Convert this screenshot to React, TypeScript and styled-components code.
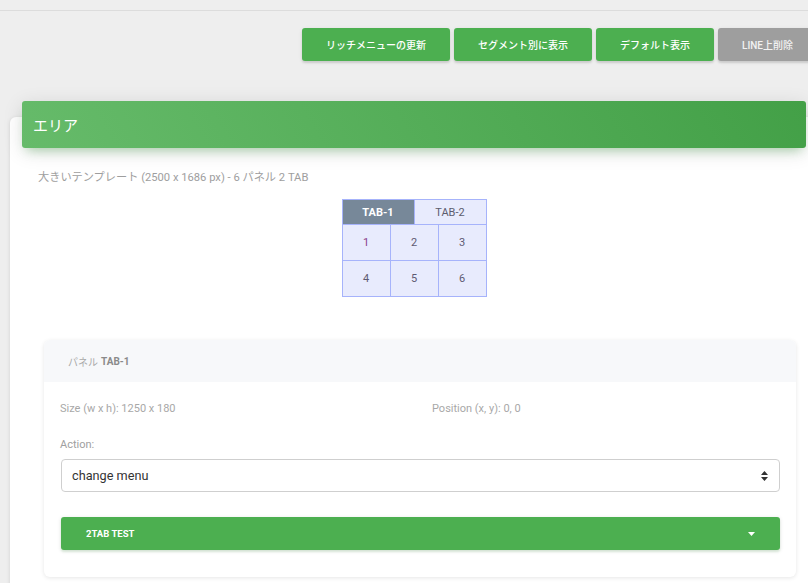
import * as React from 'react';
import styled, { createGlobalStyle } from 'styled-components';

const GlobalStyle = createGlobalStyle`
  html, body {
    margin: 0;
    padding: 0;
    background: #eeeeee;
    overflow: hidden;
  }
  body {
    font-family: Roboto, "Noto Sans CJK JP", "Liberation Sans", sans-serif;
    color: #333;
  }
`;

const Page = styled.div`
  width: 818px;
`;

const TopStrip = styled.div`
  height: 10px;
  border-bottom: 1px solid #dcdcdc;
`;

const Toolbar = styled.div`
  display: flex;
  justify-content: flex-end;
  gap: 4px;
  margin-top: 17px;
  margin-right: 1px;
`;

const ActionButton = styled.button<{ $muted?: boolean }>`
  height: 33px;
  padding: 0 24px;
  border: none;
  border-radius: 3px;
  background: ${(p) => (p.$muted ? '#9e9e9e' : '#4caf50')};
  color: ${(p) => (p.$muted ? '#f2f2f2' : '#fff')};
  font-family: inherit;
  font-size: 10px;
  font-weight: 500;
  white-space: nowrap;
  box-shadow: 0 2px 2px 0 rgba(0, 0, 0, 0.1), 0 1px 4px 0 rgba(0, 0, 0, 0.08);
`;

const Card = styled.div`
  margin: 56px 0 0 10px;
  background: #fff;
  border-radius: 6px;
  box-shadow: 0 1px 4px rgba(0, 0, 0, 0.12);
  padding-bottom: 40px;
`;

const CardHeader = styled.div`
  position: relative;
  top: -16px;
  margin: 0 12px -16px;
  height: 47px;
  display: flex;
  align-items: center;
  padding: 0 11px;
  border-radius: 3px;
  background: linear-gradient(60deg, #66bb6a, #43a047);
  color: #fff;
  font-size: 15px;
  box-shadow: 0 4px 20px 0 rgba(0, 0, 0, 0.12),
    0 7px 10px -5px rgba(76, 175, 80, 0.4);
`;

const CardBody = styled.div`
  padding: 23px 28px 0 28px;
`;

const Description = styled.div`
  font-size: 11.2px;
  color: #9e9e9e;
  line-height: 14px;
`;

const Board = styled.div`
  width: 143px;
  margin: 14px auto 0;
  padding: 1px;
  background: #a6b3fb;
  display: grid;
  gap: 1px;
`;

const TabRow = styled.div`
  display: grid;
  grid-template-columns: 1fr 1fr;
  gap: 1px;
`;

const Tab = styled.div<{ $active?: boolean }>`
  height: 24px;
  display: flex;
  align-items: center;
  justify-content: center;
  font-size: 11px;
  background: ${(p) => (p.$active ? '#778899' : '#e8ebfd')};
  color: ${(p) => (p.$active ? '#fff' : '#5c5c6e')};
  font-weight: ${(p) => (p.$active ? 700 : 400)};
`;

const CellGrid = styled.div`
  display: grid;
  grid-template-columns: repeat(3, 47px);
  grid-auto-rows: 35px;
  gap: 1px;
`;

const Cell = styled.div<{ $highlight?: boolean }>`
  display: flex;
  align-items: center;
  justify-content: center;
  font-size: 11px;
  background: #e8ebfd;
  color: ${(p) => (p.$highlight ? '#8a3f8a' : '#5e5a72')};
`;

const Panel = styled.div`
  margin: 43px -6px 0 6px;
  background: #fff;
  border-radius: 6px;
  box-shadow: 0 1px 4px rgba(0, 0, 0, 0.1);
  overflow: hidden;
`;

const PanelHeader = styled.div`
  height: 42px;
  display: flex;
  align-items: center;
  padding: 0 24px;
  background: #f7f8fa;
  font-size: 10px;
  color: #a8a8a8;

  b {
    color: #8a8a8a;
    margin-left: 3px;
  }
`;

const PanelBody = styled.div`
  padding: 20px 16px 27px;
`;

const InfoRow = styled.div`
  display: grid;
  grid-template-columns: 372px 1fr;
  font-size: 11px;
  color: #a8a8a8;
  line-height: 14px;
`;

const FieldLabel = styled.div`
  margin-top: 22px;
  font-size: 11px;
  color: #a0a0a0;
  line-height: 14px;
`;

const SelectBox = styled.div`
  margin: 7px 0 0 1px;
  height: 31px;
  border: 1px solid #cfcfcf;
  border-radius: 4px;
  display: flex;
  align-items: center;
  justify-content: space-between;
  padding: 0 11px 0 10px;
  font-size: 12.7px;
  color: #333;
`;

const GroupButton = styled.div`
  margin: 25px 0 0 1px;
  height: 33px;
  border-radius: 3px;
  background: #4caf50;
  color: #fff;
  display: flex;
  align-items: center;
  justify-content: space-between;
  padding: 0 25px 0 25px;
  font-size: 9.5px;
  font-weight: 700;
  text-transform: uppercase;
  box-shadow: 0 2px 2px 0 rgba(76, 175, 80, 0.14),
    0 1px 4px 0 rgba(0, 0, 0, 0.12);
`;

const SortIcon = () => (
  <svg width="7" height="10" viewBox="0 0 7 10">
    <path d="M3.5 0 L7 4 H0 Z M3.5 10 L0 6 H7 Z" fill="#333" />
  </svg>
);

const Caret = () => (
  <svg width="7" height="4" viewBox="0 0 7 4">
    <path d="M0 0 H7 L3.5 4 Z" fill="#fff" />
  </svg>
);

const App = (): React.ReactElement => {
  const cells = [1, 2, 3, 4, 5, 6];
  return (
    <Page>
      <GlobalStyle />
      <TopStrip />
      <Toolbar>
        <ActionButton>リッチメニューの更新</ActionButton>
        <ActionButton>セグメント別に表示</ActionButton>
        <ActionButton>デフォルト表示</ActionButton>
        <ActionButton $muted>LINE上削除</ActionButton>
      </Toolbar>
      <Card>
        <CardHeader>エリア</CardHeader>
        <CardBody>
          <Description>
            大きいテンプレート (2500 x 1686 px) - 6 パネル 2 TAB
          </Description>
          <Board>
            <TabRow>
              <Tab $active>TAB-1</Tab>
              <Tab>TAB-2</Tab>
            </TabRow>
            <CellGrid>
              {cells.map((n) => (
                <Cell key={n} $highlight={n === 1}>
                  {n}
                </Cell>
              ))}
            </CellGrid>
          </Board>
          <Panel>
            <PanelHeader>
              パネル<b>TAB-1</b>
            </PanelHeader>
            <PanelBody>
              <InfoRow>
                <span>Size (w x h): 1250 x 180</span>
                <span>Position (x, y): 0, 0</span>
              </InfoRow>
              <FieldLabel>Action:</FieldLabel>
              <SelectBox>
                <span>change menu</span>
                <SortIcon />
              </SelectBox>
              <GroupButton>
                <span>2TAB TEST</span>
                <Caret />
              </GroupButton>
            </PanelBody>
          </Panel>
        </CardBody>
      </Card>
    </Page>
  );
};

export default App;
